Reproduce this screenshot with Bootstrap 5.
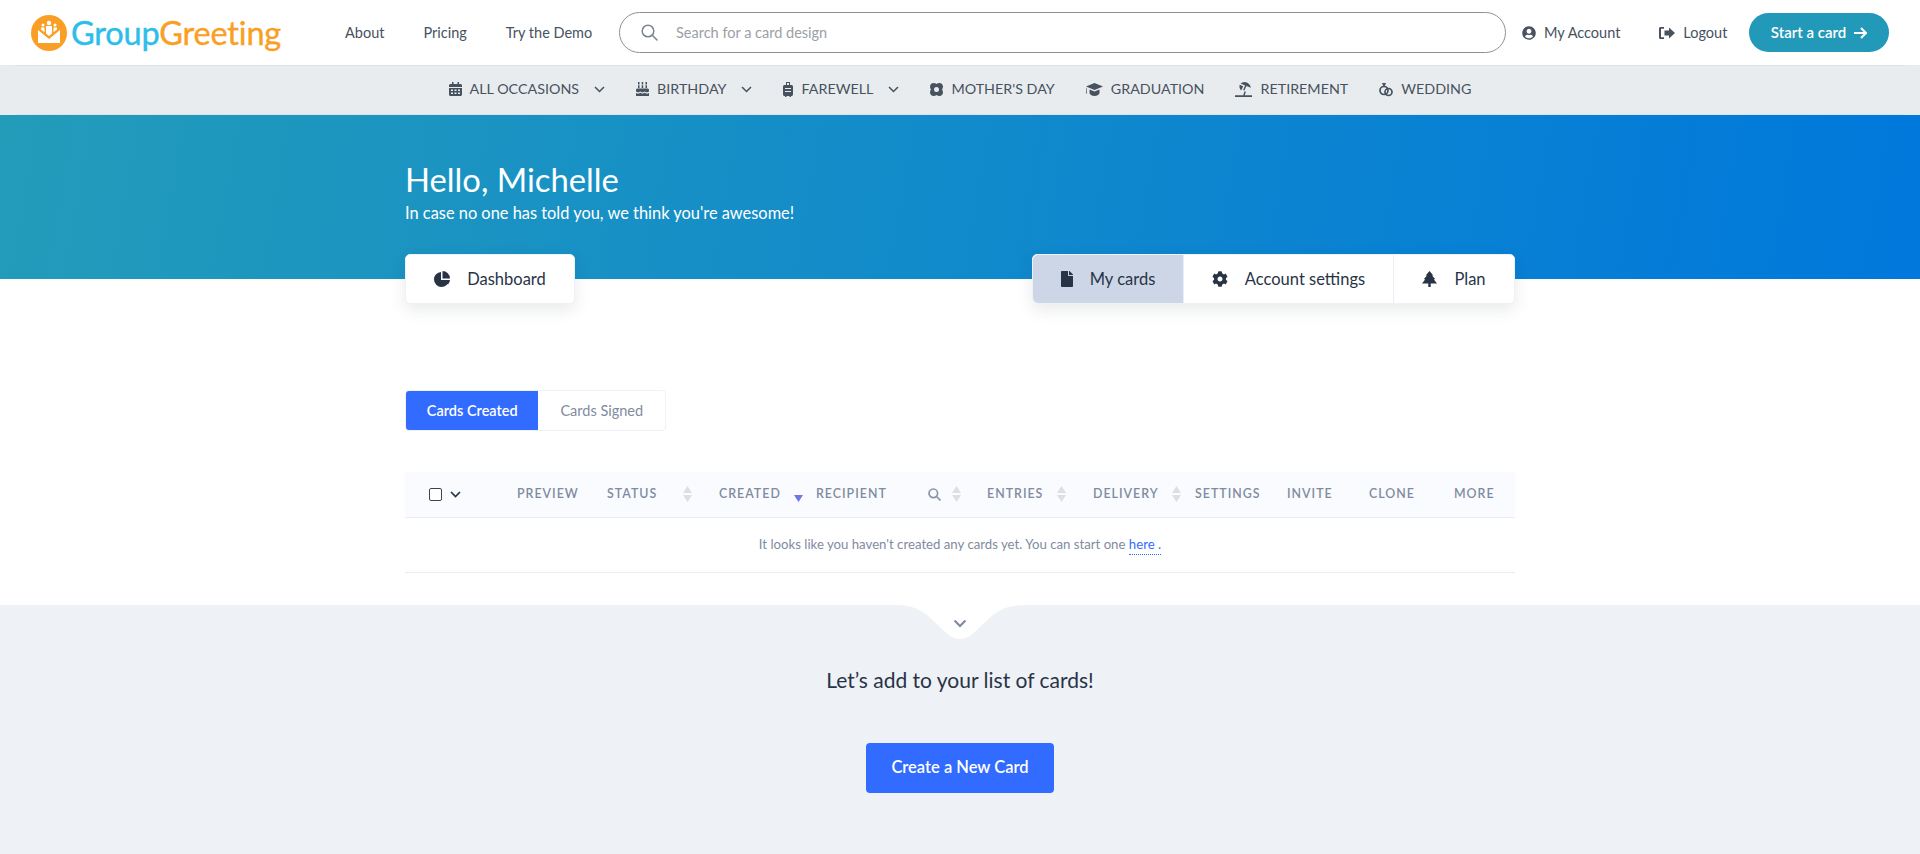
<!DOCTYPE html>
<html lang="en">

<head>
    <meta charset="UTF-8" />
    <meta name="viewport" content="width=device-width, initial-scale=1" />
    <title>GroupGreeting - My cards</title>

    <link href="https://cdn.jsdelivr.net/npm/bootstrap@5.3.0/dist/css/bootstrap.min.css" rel="stylesheet" />

    <style>
        body {
            font-family: "Lato", "Noto Sans", sans-serif;
            color: #283446;
            background-color: #fff;
            height: 854px;
            overflow: hidden;
        }

        svg {
            display: block;
            flex-shrink: 0;
        }

        /* top bar */
        .top-bar {
            height: 65px;
            padding: 12px 31px;
            background-color: #fff;
        }

        .brand {
            width: 314px;
            flex-shrink: 0;
            font-family: "Lato", sans-serif;
            font-size: 32.5px;
            line-height: 36px;
            letter-spacing: -.2px;
            text-decoration: none;
            -webkit-text-stroke: .4px;
        }

        .brand-blue {
            color: #2dbdea;
        }

        .brand-orange {
            color: #fa9f25;
        }

        .top-link {
            color: #47525e;
            font-size: 14.5px;
            text-decoration: none;
            white-space: nowrap;
        }

        .main-links {
            gap: 39px;
            width: 274px;
            flex-shrink: 0;
        }

        .search-pill {
            width: 887px;
            height: 41px;
            flex-shrink: 0;
            border: 1px solid #8d9196;
            border-radius: 21px;
            padding-left: 21px;
            gap: 16px;
        }

        .search-pill input {
            border: 0;
            outline: 0;
            flex-grow: 1;
            font-size: 14.5px;
            color: #47525e;
            background-color: transparent;
        }

        .search-pill input::placeholder {
            color: #9aa0a6;
        }

        .account-links {
            margin-left: 16px;
            gap: 39px;
        }

        .btn-start {
            width: 140px;
            height: 39px;
            margin-left: auto;
            flex-shrink: 0;
            border-radius: 20px;
            background-color: #2299b9;
            color: #fff;
            font-size: 15px;
            font-weight: 600;
            border: 0;
        }

        .btn-start:hover {
            background-color: #1d88a5;
            color: #fff;
        }

        /* occasions */
        .occasion-bar {
            height: 50px;
            background-color: #e9ecef;
        }

        .occasion-inner {
            height: 50px;
            margin: 0 15px;
            padding-bottom: 2px;
            border-top: 1px solid #dee2e6;
            border-bottom: 1px solid #dee2e6;
            gap: 31px;
        }

        .occasion {
            color: #47525e;
            font-size: 14.3px;
            text-decoration: none;
            gap: 8px;
            white-space: nowrap;
        }

        .occasion-chevron {
            margin-left: 7px;
        }

        /* hero */
        .hero {
            height: 164px;
            background: linear-gradient(100deg, #239cba 0%, #0078dc 100%);
            color: #fff;
            padding-top: 47px;
        }

        .page-wrap {
            width: 1110px;
            margin: 0 auto;
        }

        .hero h1 {
            font-size: 32.8px;
            line-height: 36px;
            font-weight: 400;
            margin: 0;
        }

        .hero p {
            font-size: 16.4px;
            line-height: 22px;
            margin: 4px 0 0 0;
        }

        .tab-row {
            margin-top: -25px;
            height: 50px;
        }

        .tab-box {
            background-color: #fff;
            border-radius: 5px;
            box-shadow: 0 6px 16px rgba(40, 52, 70, .1);
            border: 1px solid #eef1f6;
        }

        .tab-item {
            height: 48px;
            gap: 17px;
            color: #283446;
            font-size: 16.5px;
            text-decoration: none;
            border-right: 1px solid #e9eef6;
        }

        .tab-item:last-child {
            border-right: 0;
        }

        .tab-item.is-active {
            background-color: #cdd6e6;
            border-radius: 5px 0 0 5px;
        }

        .w-dashboard {
            width: 168px;
        }

        .w-mycards {
            width: 151px;
        }

        .w-account {
            width: 210px;
        }

        .w-plan {
            width: 120px;
        }

        /* segmented */
        .seg-group {
            margin-top: 86px;
            height: 41px;
            width: 261px;
            border: 1px solid #eef1f6;
            border-radius: 4px;
        }

        .seg-btn {
            font-size: 14.5px;
            text-decoration: none;
            color: #7f8ba0;
            width: 127px;
        }

        .seg-btn.is-active {
            width: 133px;
            background-color: #316bff;
            color: #fff;
            font-weight: 600;
            border-radius: 3px 0 0 3px;
        }

        /* table */
        .cards-table {
            table-layout: fixed;
            margin: 41px 0 0 0;
            width: 1110px;
        }

        .cards-table th {
            height: 45px;
            padding: 0;
            background-color: #f9fbfe;
            color: #7f8ba0;
            font-size: 12.4px;
            font-weight: 600;
            letter-spacing: 1px;
            text-transform: uppercase;
            vertical-align: middle;
            border-bottom: 1px solid #e9edf3;
        }

        .cards-table td {
            height: 55px;
            padding: 0;
            text-align: center;
            color: #7f8ba0;
            font-size: 13.2px;
            vertical-align: middle;
            border-bottom: 1px solid #e9edf3;
        }

        .cards-table td a {
            color: #316bff;
            text-decoration: none;
            border-bottom: 1px dotted #316bff;
            padding-bottom: 2px;
        }

        .c-check { width: 112px; }
        .c-preview { width: 90px; }
        .c-status { width: 112px; }
        .c-created { width: 97px; }
        .c-recipient { width: 171px; }
        .c-entries { width: 106px; }
        .c-delivery { width: 102px; }
        .c-settings { width: 92px; }
        .c-invite { width: 82px; }
        .c-clone { width: 85px; }
        .c-more { width: 61px; }

        .check-box {
            width: 13px;
            height: 13px;
            margin-left: 24px;
            border: 1px solid #3c4450;
            border-radius: 2px;
            background-color: #fff;
            appearance: none;
        }

        .sort-cell {
            padding-right: 27px;
        }

        .sort-cell-last {
            padding-right: 14px;
        }

        .sort-cell-created {
            padding-right: 13px;
        }

        .sort-cell-search {
            padding-right: 26px;
            gap: 11px;
        }

        /* bottom */
        .add-section {
            margin-top: 32px;
            height: 250px;
            background-color: #eef1f6;
            position: relative;
        }

        .notch {
            position: absolute;
            top: 0;
            left: 50%;
            margin-left: -67px;
        }

        .add-section h2 {
            font-size: 21px;
            font-weight: 400;
            line-height: 28px;
            padding-top: 61px;
            margin: 0;
            color: #283446;
        }

        .btn-create {
            width: 188px;
            height: 50px;
            margin-top: 49px;
            background-color: #316bff;
            border: 0;
            color: #fff;
            font-size: 16.5px;
            font-weight: 600;
            border-radius: 4px;
        }

        .btn-create:hover {
            background-color: #255ae0;
            color: #fff;
        }
    </style>
</head>

<body>

    <!-- top bar -->
    <nav class="top-bar d-flex align-items-center">
        <a class="brand d-flex align-items-center" href="#">
            <svg width="36" height="36" viewBox="0 0 36 36" class="me-1">
                <circle cx="18" cy="18" r="18" fill="#fa9f25" />
                <path d="M7 15l11 9 11-9v13H7z" fill="#fff" />
                <circle cx="18" cy="8" r="2.200" fill="#fff" />
                <path d="M15 11h6v7.500L18 21l-3-2.500z" fill="#fff" />
                <circle cx="12" cy="10" r="1.500" fill="#fff" />
                <path d="M10 12.500h3.500v4.800l-3.500-2.800z" fill="#fff" />
                <circle cx="24" cy="10" r="1.500" fill="#fff" />
                <path d="M22.500 12.500H26v2L22.500 17.300z" fill="#fff" />
            </svg>
            <span><span class="brand-blue">Group</span><span class="brand-orange">Greeting</span></span>
        </a>
        <div class="main-links d-flex">
            <a class="top-link" href="#">About</a>
            <a class="top-link" href="#">Pricing</a>
            <a class="top-link" href="#">Try the Demo</a>
        </div>
        <form class="search-pill d-flex align-items-center">
            <svg width="17" height="17" viewBox="0 0 17 17" fill="none" stroke="#7b838c" stroke-width="1.500">
                <circle cx="7" cy="7" r="5.800" />
                <path d="M11.300 11.300L16 16" stroke-linecap="round" />
            </svg>
            <input type="text" placeholder="Search for a card design" />
        </form>
        <div class="account-links d-flex align-items-center">
            <a class="top-link d-flex align-items-center gap-2" href="#">
                <svg width="14" height="14" viewBox="0 0 496 512" fill="#47525e">
                    <path d="M248 8C111 8 0 119 0 256s111 248 248 248 248-111 248-248S385 8 248 8zm0 96c48.600 0 88 39.400 88 88s-39.400 88-88 88-88-39.400-88-88 39.400-88 88-88zm0 344c-58.700 0-111.300-26.600-146.500-68.200 18.800-35.400 55.600-59.800 98.500-59.800 2.400 0 4.800.4 7.100 1.100 13 4.200 26.600 6.900 40.900 6.900 14.300 0 28-2.700 40.900-6.900 2.300-.7 4.700-1.100 7.100-1.100 42.900 0 79.700 24.400 98.500 59.800C359.300 421.400 306.700 448 248 448z" />
                </svg>
                My Account
            </a>
            <a class="top-link d-flex align-items-center gap-2" href="#">
                <svg width="16" height="14" viewBox="0 0 16 14" fill="#47525e">
                    <path d="M16 7l-6-5.500V4.500H5.500v5H10v3zM5 1H1.500C.7 1 0 1.700 0 2.500v9C0 12.300.7 13 1.500 13H5v-1.800H2V2.800h3z" />
                </svg>
                Logout
            </a>
        </div>
        <a class="btn btn-start d-flex align-items-center justify-content-center gap-2" href="#">
            Start a card
            <svg width="13" height="12" viewBox="0 0 13 12" fill="none" stroke="#fff" stroke-width="2">
                <path d="M0 6h11.500M7 1l5 5-5 5" />
            </svg>
        </a>
    </nav>

    <!-- occasions -->
    <div class="occasion-bar">
        <div class="occasion-inner d-flex align-items-center justify-content-center">
            <a class="occasion d-flex align-items-center" href="#">
                <svg width="13" height="14" viewBox="0 0 13 14" fill="#47525e">
                    <path d="M3 0h1.500v2h4V0H10v2h1.500c.8 0 1.500.7 1.500 1.500V5H0V3.500C0 2.700.7 2 1.500 2H3zM0 6h13v6.500c0 .8-.7 1.500-1.500 1.500h-10C.7 14 0 13.300 0 12.500zm2 1.500v1.500h2V7.500zm3.500 0v1.500h2V7.500zm3.500 0v1.500h2V7.500zM2 10.500V12h2v-1.500zm3.500 0V12h2v-1.500zm3.500 0V12h2v-1.500z" />
                </svg>
                ALL OCCASIONS
                <svg class="occasion-chevron" width="11" height="7" viewBox="0 0 11 7" fill="none" stroke="#47525e" stroke-width="1.500">
                    <path d="M1 1l4.500 4.500L10 1" />
                </svg>
            </a>
            <a class="occasion d-flex align-items-center" href="#">
                <svg width="13" height="14" viewBox="0 0 13 14" fill="#47525e">
                    <path d="M2 0h1.500v2.500H2zm3.700 0h1.500v2.500H5.700zm3.800 0H11v2.500H9.500zM2 3.200h1.500v2.800H2zm3.700 0h1.500v2.800H5.700zm3.800 0H11v2.800H9.500zM1.500 6.500h10c.8 0 1.500.7 1.500 1.500v1.500c-1 0-1.300 1-2.200 1s-1.200-1-2.100-1-1.300 1-2.200 1-1.300-1-2.200-1-1.200 1-2.100 1S1 9.500 0 9.500V8c0-.8.7-1.500 1.500-1.500zM0 11c1 .2 1.300.8 2.200.8s1.200-1 2.100-1 1.300 1 2.200 1 1.300-1 2.200-1 1.200 1 2.100 1 1.200-.6 2.200-.8v3H0z" />
                </svg>
                BIRTHDAY
                <svg class="occasion-chevron" width="11" height="7" viewBox="0 0 11 7" fill="none" stroke="#47525e" stroke-width="1.500">
                    <path d="M1 1l4.500 4.500L10 1" />
                </svg>
            </a>
            <a class="occasion d-flex align-items-center" href="#">
                <svg width="10" height="15" viewBox="0 0 10 15" fill="#47525e">
                    <path d="M3 0h4v3H6V1H4v2H3zM1.500 3h7C9.300 3 10 3.700 10 4.500v8c0 .8-.7 1.500-1.500 1.500H8v1H6.500v-1h-3v1H2v-1h-.5C.7 14 0 13.300 0 12.500v-8C0 3.700.7 3 1.500 3zM2 6v1h6V6zm0 3v1h6V9z" />
                </svg>
                FAREWELL
                <svg class="occasion-chevron" width="11" height="7" viewBox="0 0 11 7" fill="none" stroke="#47525e" stroke-width="1.500">
                    <path d="M1 1l4.500 4.500L10 1" />
                </svg>
            </a>
            <a class="occasion d-flex align-items-center" href="#">
                <svg width="13" height="13" viewBox="0 0 13 13" fill="#47525e">
                    <path fill-rule="evenodd" d="M3.500 0c1.300 0 2.300.4 3 1 .7-.6 1.700-1 3-1C11.400 0 13 1.600 13 3.500c0 1.300-.4 2.300-1 3 .6.700 1 1.700 1 3 0 1.900-1.600 3.500-3.500 3.500-1.300 0-2.300-.4-3-1-.7.6-1.700 1-3 1C1.600 13 0 11.400 0 9.500c0-1.300.4-2.300 1-3-.6-.7-1-1.700-1-3C0 1.600 1.600 0 3.500 0zm3 4a2.500 2.500 0 100 5 2.500 2.500 0 000-5z" />
                </svg>
                MOTHER'S DAY
            </a>
            <a class="occasion d-flex align-items-center" href="#">
                <svg width="17" height="13" viewBox="0 0 17 13" fill="#47525e">
                    <path d="M8.500 0L17 3.500 8.500 7 0 3.500zM3.500 6.500l5 2 5-2V10c0 1.500-2.300 3-5 3s-5-1.500-5-3zM1 5v5.500H.2L.5 4.800z" />
                </svg>
                GRADUATION
            </a>
            <a class="occasion d-flex align-items-center" href="#">
                <svg width="17" height="15" viewBox="0 0 17 15" fill="#47525e">
                    <path d="M9.500 0c3.200.2 5.800 2.600 6.500 5.800l-4.600-1.900-2 4.700-1.300-.5 2-4.700-4.600-1.900C6.700 1 8 .1 9.500 0zM4.700 2.800l3.500 1.400-2 4.200C4.600 7.200 4 4.600 4.700 2.800zM0 13.300h8.200l1.400-4 1.300.5-1.200 3.500H17V15H0z" />
                </svg>
                RETIREMENT
            </a>
            <a class="occasion d-flex align-items-center" href="#">
                <svg width="14" height="15" viewBox="0 0 14 15" fill="none" stroke="#47525e" stroke-width="1.700">
                    <circle cx="5" cy="8.500" r="4" />
                    <circle cx="9.500" cy="10" r="3.500" />
                    <path d="M3.500 1.500h3L5 4z" fill="#47525e" stroke-width="1" />
                </svg>
                WEDDING
            </a>
        </div>
    </div>

    <!-- hero -->
    <header class="hero">
        <div class="page-wrap">
            <h1>Hello, Michelle</h1>
            <p>In case no one has told you, we think you're awesome!</p>
        </div>
    </header>

    <main class="page-wrap">
        <div class="tab-row d-flex justify-content-between">
            <div class="tab-box d-flex">
                <a class="tab-item w-dashboard d-flex align-items-center justify-content-center" href="#">
                    <svg width="16" height="16" viewBox="0 0 16 16" fill="#283446">
                        <path d="M7 1v8h8a7.500 7.500 0 01-7.500 7A7.500 7.500 0 010 8.500 7.500 7.500 0 017 1zM8.500 0A7.500 7.500 0 0116 7.500H8.500zM9 9h7a7 7 0 01-2 4.500z" />
                    </svg>
                    Dashboard
                </a>
            </div>
            <div class="tab-box d-flex">
                <a class="tab-item w-mycards is-active d-flex align-items-center justify-content-center" href="#">
                    <svg width="12" height="16" viewBox="0 0 384 512" fill="#283446">
                        <path d="M224 136V0H24C10.700 0 0 10.700 0 24v464c0 13.300 10.700 24 24 24h336c13.300 0 24-10.700 24-24V160H248c-13.200 0-24-10.800-24-24zm160-14.100v6.100H256V0h6.100c6.400 0 12.500 2.500 17 7l97.900 98c4.500 4.500 7 10.600 7 16.900z" />
                    </svg>
                    My cards
                </a>
                <a class="tab-item w-account d-flex align-items-center justify-content-center" href="#">
                    <svg width="16" height="16" viewBox="0 0 512 512" fill="#283446">
                        <path d="M487.400 315.700l-42.600-24.600c4.300-23.200 4.300-47 0-70.200l42.600-24.600c4.900-2.800 7.100-8.600 5.500-14-11.100-35.600-30-67.800-54.700-94.600-3.800-4.100-10-5.100-14.800-2.300L380.800 110c-17.900-15.400-38.500-27.300-60.800-35.100V25.800c0-5.600-3.900-10.500-9.400-11.700-36.700-8.200-74.300-7.800-109.200 0-5.500 1.200-9.400 6.100-9.400 11.700V75c-22.200 7.900-42.800 19.800-60.800 35.100L88.700 85.500c-4.900-2.800-11-1.900-14.800 2.300-24.700 26.700-43.600 58.900-54.700 94.600-1.700 5.400.6 11.200 5.500 14L67.300 221c-4.300 23.200-4.300 47 0 70.200l-42.600 24.600c-4.900 2.800-7.100 8.600-5.500 14 11.100 35.600 30 67.800 54.700 94.600 3.800 4.100 10 5.100 14.800 2.300l42.600-24.600c17.900 15.400 38.500 27.300 60.800 35.100v49.200c0 5.600 3.900 10.500 9.400 11.700 36.700 8.200 74.300 7.800 109.200 0 5.500-1.200 9.400-6.100 9.400-11.700v-49.200c22.200-7.900 42.800-19.800 60.800-35.100l42.600 24.600c4.900 2.800 11 1.900 14.800-2.300 24.700-26.700 43.600-58.900 54.700-94.600 1.500-5.500-.7-11.300-5.600-14.100zM256 336c-44.100 0-80-35.900-80-80s35.900-80 80-80 80 35.900 80 80-35.900 80-80 80z" />
                    </svg>
                    Account settings
                </a>
                <a class="tab-item w-plan d-flex align-items-center justify-content-center" href="#">
                    <svg width="15" height="16" viewBox="0 0 15 16" fill="#283446">
                        <path d="M7.500 0l3.800 4.500H10l3.300 3.700h-1.600L15 12.500H8.700V16H6.300v-3.500H0l3.300-4.300H1.700L5 4.500H3.700z" />
                    </svg>
                    Plan
                </a>
            </div>
        </div>

        <div class="seg-group d-flex">
            <a class="seg-btn is-active d-flex align-items-center justify-content-center" href="#">Cards Created</a>
            <a class="seg-btn d-flex align-items-center justify-content-center" href="#">Cards Signed</a>
        </div>

        <table class="table cards-table">
            <colgroup>
                <col class="c-check" />
                <col class="c-preview" />
                <col class="c-status" />
                <col class="c-created" />
                <col class="c-recipient" />
                <col class="c-entries" />
                <col class="c-delivery" />
                <col class="c-settings" />
                <col class="c-invite" />
                <col class="c-clone" />
                <col class="c-more" />
            </colgroup>
            <thead>
                <tr>
                    <th>
                        <div class="d-flex align-items-center gap-2">
                            <input class="check-box" type="checkbox" />
                            <svg width="11" height="7" viewBox="0 0 11 7" fill="none" stroke="#283446" stroke-width="1.700">
                                <path d="M1 1l4.500 4.500L10 1" />
                            </svg>
                        </div>
                    </th>
                    <th>Preview</th>
                    <th>
                        <div class="sort-cell d-flex align-items-center justify-content-between">
                            Status
                            <svg width="9" height="16" viewBox="0 0 9 16" fill="#dcdfe3">
                                <path d="M4.500 0L9 7H0zM0 9h9l-4.500 7z" />
                            </svg>
                        </div>
                    </th>
                    <th>
                        <div class="sort-cell-created d-flex align-items-center justify-content-between">
                            Created
                            <svg class="mt-2" width="9" height="7" viewBox="0 0 9 7" fill="#6e78e0">
                                <path d="M0 0h9L4.500 7z" />
                            </svg>
                        </div>
                    </th>
                    <th>
                        <div class="sort-cell-search d-flex align-items-center justify-content-between">
                            <span class="flex-grow-1">Recipient</span>
                            <svg width="13" height="13" viewBox="0 0 13 13" fill="none" stroke="#8a95a8" stroke-width="1.700">
                                <circle cx="5.300" cy="5.300" r="4.300" />
                                <path d="M8.500 8.500L12.500 12.500" />
                            </svg>
                            <svg width="9" height="16" viewBox="0 0 9 16" fill="#dcdfe3">
                                <path d="M4.500 0L9 7H0zM0 9h9l-4.500 7z" />
                            </svg>
                        </div>
                    </th>
                    <th>
                        <div class="sort-cell d-flex align-items-center justify-content-between">
                            Entries
                            <svg width="9" height="16" viewBox="0 0 9 16" fill="#dcdfe3">
                                <path d="M4.500 0L9 7H0zM0 9h9l-4.500 7z" />
                            </svg>
                        </div>
                    </th>
                    <th>
                        <div class="sort-cell-last d-flex align-items-center justify-content-between">
                            Delivery
                            <svg width="9" height="16" viewBox="0 0 9 16" fill="#dcdfe3">
                                <path d="M4.500 0L9 7H0zM0 9h9l-4.500 7z" />
                            </svg>
                        </div>
                    </th>
                    <th>Settings</th>
                    <th>Invite</th>
                    <th>Clone</th>
                    <th>More</th>
                </tr>
            </thead>
            <tbody>
                <tr>
                    <td colspan="11">It looks like you haven't created any cards yet. You can start one <a href="#">here .</a></td>
                </tr>
            </tbody>
        </table>
    </main>

    <!-- add a card -->
    <section class="add-section text-center">
        <svg class="notch" width="134" height="35" viewBox="0 0 134 35">
            <path d="M0 0C26 0 32 8 46 21 55 30 60 34 67 34 74 34 79 30 88 21 102 8 108 0 134 0z" fill="#fff" />
            <path d="M61.500 15.500l5.500 5.500 5.500-5.500" fill="none" stroke="#7f8ba0" stroke-width="2.200" />
        </svg>
        <h2>Let’s add to your list of cards!</h2>
        <button class="btn btn-create" type="button">Create a New Card</button>
    </section>

    <script src="https://cdn.jsdelivr.net/npm/bootstrap@5.3.0/dist/js/bootstrap.bundle.min.js"></script>

</body>

</html>
